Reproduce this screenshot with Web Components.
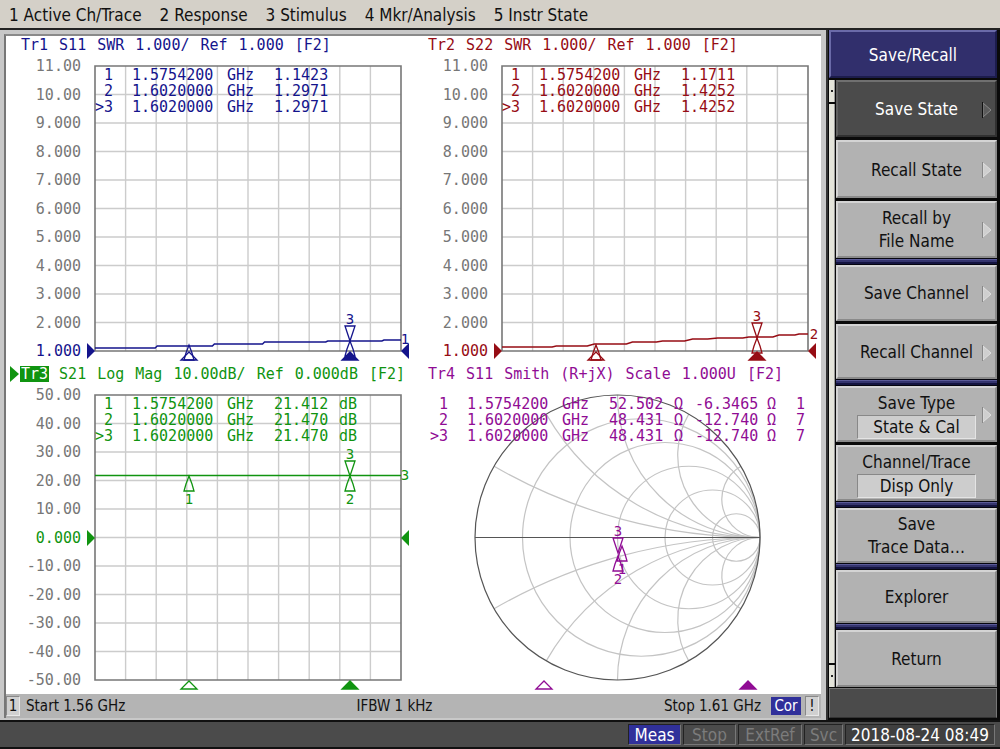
<!DOCTYPE html>
<html lang="en">
<head>
<meta charset="utf-8">
<title>Network Analyzer</title>
<style>
  html, body { margin: 0; height: 100%; background: #000; }
</style>
</head>
<body>
<analyzer-app></analyzer-app>

<script>
const UI = '"DejaVu Sans Condensed", "DejaVu Sans", sans-serif';
const MONO = '"DejaVu Sans Mono", monospace';

class Base extends HTMLElement {
  connectedCallback() {
    if (this.shadowRoot) return;
    const t = document.createElement('template');
    t.innerHTML = '<style>*{box-sizing:border-box}</style>' + this.view();
    this.attachShadow({ mode: 'open' }).append(t.content.cloneNode(true));
  }
}

/* ---------- menu bar ---------- */
customElements.define('menu-bar', class extends Base {
  view() {
    return `<style>
      :host { display: block; background: #d4d0c8; border-bottom: 2px solid #222; }
      nav { display: flex; gap: 18px; padding: 2px 9px 0; height: 28px; align-items: center; }
      ::slotted(button) { all: unset; white-space: nowrap; cursor: pointer; }
    </style><nav aria-label="Main menu"><slot></slot></nav>`;
  }
});

/* ---------- trace panel: title, scale labels, chart ---------- */
customElements.define('trace-panel', class extends Base {
  view() {
    const words = this.getAttribute('heading').split(' ');
    const active = this.hasAttribute('active');
    return `<style>
      :host { display: flex; flex-direction: column; min-width: 0; min-height: 0;
              font: 15px/18px ${MONO}; color: var(--trace); }
      h2 { display: flex; gap: 11px; margin: 0 0 12px; padding-left: 13px; font: inherit;
           white-space: nowrap; position: relative; }
      h2 span:first-of-type { padding: 0 1px; margin-right: -1px; height: 16px; line-height: 16px; margin-top: 1px; }
      :host([active]) h2 span:first-of-type { background: var(--trace); color: #fff; }
      h2 svg { position: absolute; left: 3px; top: 1px; fill: currentColor; }
      .body { flex: 1; min-height: 0; display: flex; padding-bottom: 14px; }
    </style>
    <h2>${active ? '<svg width="9" height="16" aria-hidden="true"><path d="M0 0L9 8L0 16z"/></svg>' : ''}${words.map(w => `<span>${w}</span>`).join('')}</h2>
    <div class="body"><slot></slot></div>`;
  }
});

/* ---------- marker readout table ---------- */
customElements.define('marker-table', class extends Base {
  view() {
    const rows = this.getAttribute('rows').split(';').map(r => r.split('|'));
    return `<style>
      :host { display: block; font: 15px/16px ${MONO}; color: var(--trace); }
      table { border-collapse: collapse; table-layout: fixed; width: 0; }
      td { padding: 0; height: 16px; white-space: pre; }
    </style>
    <table aria-label="Marker readout"><colgroup>${[37, 95, 47, 65, 21, 72, 29, 10].slice(0, rows[0].length).map(w => `<col style="width:${w}px">`).join('')}</colgroup>
    ${rows.map(r => `<tr>${r.map(c => `<td>${c}</td>`).join('')}</tr>`).join('')}</table>`;
  }
});

/* ---------- marker glyph; its host point is the marker's tip ---------- */
customElements.define('trace-marker', class extends Base {
  view() {
    const kind = this.getAttribute('kind'), n = this.getAttribute('n') || '';
    const shape = {
      down: '<path d="M-5 -15H5L3 -9L0 0L-3 -9z"/>',
      up: '<path d="M-5 15H5L3 8L0 0L-3 8z"/>',
      open: '<path d="M-8 9H8L0 1z"/>',
      full: '<path d="M-8 9H8L0 1z" fill="currentColor"/>',
      left: '<path d="M-8 -8L0 0L-8 8z" fill="currentColor" stroke="none"/>',
      right: '<path d="M8 -8L0 0L8 8z" fill="currentColor" stroke="none"/>',
      none: ''
    }[kind];
    const ty = kind === 'down' ? -17 : kind === 'up' ? 28 : 5;
    return `<style>
      :host { position: absolute; width: 0; height: 0; color: var(--trace); }
      svg { display: block; overflow: visible; fill: none; stroke: currentColor; stroke-width: 1.3; }
      text { font: 14px ${MONO}; fill: currentColor; stroke: none; text-anchor: middle; }
    </style><svg width="1" height="1">${shape}${n ? `<text x="0" y="${ty}">${n}</text>` : ''}</svg>`;
  }
});

const markers = s => s.split(';').map(m => {
  const [kind, x, y, n] = m.split(',');
  return `<trace-marker kind="${kind}" n="${n || ''}" style="left:${x}%;top:${y}%"></trace-marker>`;
}).join('');

/* ---------- rectangular chart ---------- */
customElements.define('grid-chart', class extends Base {
  view() {
    const labels = this.getAttribute('scale').split(',');
    const ref = this.getAttribute('ref');
    let grid = '';
    for (let i = 1; i < 10; i++) grid += `M${i * 30.5} 0V285M0 ${i * 28.5}H305`;
    return `<style>
      :host { display: grid; grid-template-columns: 88px 1fr 13px; flex: 1; min-width: 0; }
      ol { list-style: none; margin: -9px 14px -9px 0; padding: 0; display: flex; flex-direction: column;
           justify-content: space-between; text-align: right; color: #777; }
      ol li.ref { color: var(--trace); }
      .plot { position: relative; min-height: 0; }
      .plot > svg { position: absolute; inset: 0; width: 100%; height: 100%; overflow: visible; }
      path { fill: none; vector-effect: non-scaling-stroke; }
      marker-table { position: absolute; left: 0; top: 1px; }
    </style>
    <ol>${labels.map(l => `<li${l === ref ? ' class="ref"' : ''}>${l}</li>`).join('')}</ol>
    <div class="plot">
      <svg viewBox="0 0 305 285" preserveAspectRatio="none" aria-hidden="true">
        <path d="${grid}" stroke="#ccc" stroke-width="1.4"/>
        <path d="M0 0H305V285H0z" stroke="#777" stroke-width="1.6"/>
        <path d="${this.getAttribute('path')}" stroke="var(--trace)" stroke-width="1.5"/>
      </svg>
      <marker-table rows="${this.getAttribute('rows')}"></marker-table>
      ${markers(this.getAttribute('markers'))}
    </div>`;
  }
});

/* ---------- Smith chart ---------- */
customElements.define('smith-chart', class extends Base {
  view() {
    const R = 142;
    let g = '';
    for (const r of [0.2, 0.5, 1, 2, 5])
      g += `<circle cx="${R * r / (1 + r)}" cy="0" r="${R / (1 + r)}"/>`;
    for (const deg of [30, 60, 90, 120, 150]) {
      const a = deg * Math.PI / 180, x = -Math.cos(a) * R, y = Math.sin(a) * R, q = R / Math.tan(a / 2);
      g += `<path d="M${x} ${-y}A${q} ${q} 0 0 0 ${R} 0"/><path d="M${x} ${y}A${q} ${q} 0 0 1 ${R} 0"/>`;
    }
    return `<style>
      :host { display: block; flex: 1; position: relative; min-width: 0; }
      .chart { position: absolute; inset: 0; width: 100%; height: 100%; fill: none; stroke: #c4c4c4; stroke-width: 1.2; overflow: visible; }
      .edge { stroke: #555; }
      marker-table { position: absolute; left: 16px; top: 1px; }
    </style>
    <svg class="chart" viewBox="-142 -142 284 284" aria-hidden="true">${g}
      <circle class="edge" r="142"/><path class="edge" d="M-142 0H142"/></svg>
    <marker-table rows="${this.getAttribute('rows')}"></marker-table>
    ${markers(this.getAttribute('markers'))}`;
  }
});

/* ---------- channel status line ---------- */
customElements.define('channel-status', class extends Base {
  view() {
    return `<style>
      :host { display: flex; align-items: center; height: 24px; background: #b4b4b4; font-size: 15px; line-height: 18px; color: #111; white-space: nowrap; }
      .side { flex: 0 0 43%; display: flex; align-items: center; }
      .end { flex: 1; justify-content: flex-end; gap: 4px; padding-right: 2px; }
      .box { background: #d0d0d0; border: 1px solid; border-color: #888 #e8e8e8 #e8e8e8 #888; width: 14px; height: 20px; text-align: center; }
      .cor { background: #30309a; color: #fff; width: 30px; height: 18px; text-align: center; margin-left: 6px; }
      .start { margin-left: 6px; }
    </style>
    <div class="side"><span class="box">1</span><span class="start">Start 1.56 GHz</span></div>
    <span>IFBW 1 kHz</span>
    <div class="side end"><span>Stop 1.61 GHz</span><span class="cor">Cor</span><span class="box">!</span></div>`;
  }
});

/* ---------- soft keys ---------- */
customElements.define('soft-key', class extends Base {
  view() {
    return `<style>
      :host { display: block; flex: 1; min-height: 0; }
      button { position: relative; width: 100%; height: 100%; margin: 0; padding: 2px 0 0; font: inherit; color: #111; background: #b2b2b2;
               border: 2px solid; border-color: #d4d4d4 #8a8a8a #8a8a8a #d4d4d4; display: flex; flex-direction: column;
               align-items: center; justify-content: center; line-height: 23px; white-space: pre-line; }
      :host([pressed]) button { background: #4b4b4b; color: #fff; border-color: #707070 #303030 #303030 #606060; }
      .value { background: #cdcdcd; border: 1px solid; border-color: #888 #e4e4e4 #e4e4e4 #888; width: 119px; height: 24px; line-height: 22px; }
      svg { position: absolute; right: 3px; top: calc(50% - 7px); fill: #cfcfcf; stroke: #e0e0e0; }
      :host([pressed]) svg { fill: #5c5c5c; stroke: #888; }
      svg line { stroke: #888; }
      :host([pressed]) svg line { stroke: #111; }
    </style>
    <button type="button"><span>${this.getAttribute('label').replace('/n', '\n')}</span>${this.hasAttribute('value') ? `<span class="value">${this.getAttribute('value')}</span>` : ''}${this.hasAttribute('more') ? '<svg width="10" height="16" aria-hidden="true"><path d="M1 1L9 8L1 15z"/><line x1=".5" y1="0" x2=".5" y2="16"/></svg>' : ''}</button>`;
  }
});

customElements.define('soft-panel', class extends Base {
  view() {
    return `<style>
      :host { display: flex; flex-direction: column; width: 172px; background: #0a0a0a; padding: 0 3px 2px 1px; }
      h1 { margin: 0 0 2px; height: 48px; font: inherit; line-height: 42px; text-align: center; color: #fff; background: #312f6c;
           border: 2px solid; border-color: #6a6aa8 #1c1c4c #1c1c4c #6a6aa8; padding-top: 2px; }
      .body { display: flex; flex: 1; min-height: 0; }
      .bar { width: 6px; margin-right: 1px; display: flex; flex-direction: column; gap: 2px; }
      .bar i { background: #e4e4da; border-right: 1px solid #999; }
      .bar i:nth-child(odd) { height: 22px; display: grid; place-items: center; }
      .bar i:nth-child(odd)::after { content: ""; width: 2px; height: 2px; background: #222; }
      .bar i:nth-child(2) { flex: 1; }
      .keys { flex: 1; display: flex; flex-direction: column; min-width: 0; }
      .group { display: flex; flex-direction: column; gap: 3px; min-height: 0; }
      hr { margin: 0; height: 7px; width: 100%; flex: none; border: solid #05050f; border-width: 1px 0; background: linear-gradient(#5a5a98 1px, #34346e 1px 3px, #141440 3px); }
      .rest { height: 30px; margin-top: 1px; background: #4b4b4b; border: 1px solid #777; border-bottom-color: #333; }
    </style>
    <h1>Save/Recall</h1>
    <div class="body"><div class="bar" aria-hidden="true"><i></i><i></i><i></i></div>
    <div class="keys">
      <div class="group" style="flex:179 0 0"><soft-key label="Save State" more pressed></soft-key><soft-key label="Recall State" more></soft-key><soft-key label="Recall by/nFile Name" more></soft-key></div><hr>
      <div class="group" style="flex:115 0 0"><soft-key label="Save Channel" more></soft-key><soft-key label="Recall Channel" more></soft-key></div><hr>
      <div class="group" style="flex:115 0 0"><soft-key label="Save Type" value="State &amp;amp; Cal" more></soft-key><soft-key label="Channel/Trace" value="Disp Only"></soft-key></div><hr>
      <div class="group" style="flex:55 0 0"><soft-key label="Save/nTrace Data…"></soft-key></div><hr>
      <div class="group" style="flex:54 0 0"><soft-key label="Explorer"></soft-key></div><hr>
      <div class="group" style="flex:57 0 0"><soft-key label="Return"></soft-key></div>
    </div></div>
    <div class="rest"></div>`;
  }
});

/* ---------- instrument status bar ---------- */
customElements.define('instrument-bar', class extends Base {
  view() {
    return `<style>
      :host { display: flex; justify-content: flex-end; gap: 2px; height: 29px; padding: 2px 5px 2px 2px; background: #4b4b4b;
              border-top: 2px solid #111; border-bottom: 2px solid #111; font-size: 17px; line-height: 20px; white-space: nowrap; }
      span { border: 1px solid; border-color: #222 #777 #777 #222; text-align: center; color: #7c7c7c; }
      .s { width: 53px; } .m { width: 64px; } .xs { width: 39px; }
      .on { background: #30309a; color: #fff; }
      .date { width: 150px; color: #fff; background: #404040; }
    </style>
    <span class="s on">Meas</span><span class="s">Stop</span><span class="m">ExtRef</span><span class="xs">Svc</span><span class="date">2018-08-24 08:49</span>`;
  }
});

/* ---------- whole screen ---------- */
customElements.define('analyzer-app', class extends Base {
  view() {
    const swr = '11.00,10.00,9.000,8.000,7.000,6.000,5.000,4.000,3.000,2.000,1.000';
    return `<style>
      :host { display: flex; flex-direction: column; min-height: 100vh; font: 17px/20px ${UI}; color: #111; }
      .main { flex: 1; display: flex; min-height: 0; }
      .window { flex: 1; min-width: 0; display: flex; flex-direction: column; background: #c8c8c8; padding: 4px 5px 2px 4px; border-right: 2px solid #333; }
      .frame { flex: 1; display: flex; flex-direction: column; border: solid #8a8a8a; border-width: 2px 0 0 2px; border-left-color: #777; }
      .traces { flex: 1; display: grid; grid-template: 1fr 1fr / 1fr 1fr; background: #fff; min-height: 0; padding-left: 1px; }
      .t1 { --trace: #14148c; } .t2 { --trace: #960c14; } .t3 { --trace: #109410; } .t4 { --trace: #900c94; }
    </style>
    <menu-bar><button>1 Active Ch/Trace</button><button>2 Response</button><button>3 Stimulus</button><button>4 Mkr/Analysis</button><button>5 Instr State</button></menu-bar>
    <div class="main">
      <div class="window"><div class="frame">
        <div class="traces">
          <trace-panel class="t1" heading="Tr1 S11 SWR 1.000/ Ref 1.000 [F2]">
            <grid-chart scale="${swr}" ref="1.000"
              rows=" 1|1.5754200|GHz|1.1423; 2|1.6020000|GHz|1.2971;&amp;gt;3|1.6020000|GHz|1.2971"
              path="M0 282H60L62 280H117L119 278H167L169 276H230L232 275H286L288 274H305"
              markers="left,0,100;right,100,100;up,30.7,98;open,30.7,100;up,83.4,96.5;full,83.4,100;down,83.4,96.5,3;none,101.2,95.8,1"></grid-chart>
          </trace-panel>
          <trace-panel class="t2" heading="Tr2 S22 SWR 1.000/ Ref 1.000 [F2]">
            <grid-chart scale="${swr}" ref="1.000"
              rows=" 1|1.5754200|GHz|1.1711; 2|1.6020000|GHz|1.4252;&amp;gt;3|1.6020000|GHz|1.4252"
              path="M0 281H50L54 280H85L92 278H124L130 276H154L160 275H182L190 273H205L215 272H240L246 271H270L276 269H292L296 268H305"
              markers="left,0,100;right,100,100;up,30.7,98;open,30.7,100;up,83.4,95.4;full,83.4,100;down,83.4,95.4,3;none,101.8,94.2,2"></grid-chart>
          </trace-panel>
          <trace-panel class="t3" active heading="Tr3 S21 Log Mag 10.00dB/ Ref 0.000dB [F2]">
            <grid-chart scale="50.00,40.00,30.00,20.00,10.00,0.000,-10.00,-20.00,-30.00,-40.00,-50.00" ref="0.000"
              rows=" 1|1.5754200|GHz|21.412|dB; 2|1.6020000|GHz|21.470|dB;&amp;gt;3|1.6020000|GHz|21.470|dB"
              path="M0 80.5H305"
              markers="left,0,50;right,100,50;up,30.7,28.3,1;up,83.4,28.3,2;down,83.4,28.3,3;open,30.7,100;full,83.4,100;none,101.2,28,3"></grid-chart>
          </trace-panel>
          <trace-panel class="t4" heading="Tr4 S11 Smith (R+jX) Scale 1.000U [F2]">
            <smith-chart
              rows=" 1|1.5754200|GHz|52.502|Ω|-6.3465|Ω|1; 2|1.6020000|GHz|48.431|Ω|-12.740|Ω|7;&amp;gt;3|1.6020000|GHz|48.431|Ω|-12.740|Ω|7"
              markers="down,50,55.4,3;up,51,53,1;up,50,56.5,2;open,32,100;full,82,100"></smith-chart>
          </trace-panel>
        </div>
        <channel-status></channel-status>
      </div></div>
      <soft-panel></soft-panel>
    </div>
    <instrument-bar></instrument-bar>`;
  }
});
</script>
</body>
</html>
